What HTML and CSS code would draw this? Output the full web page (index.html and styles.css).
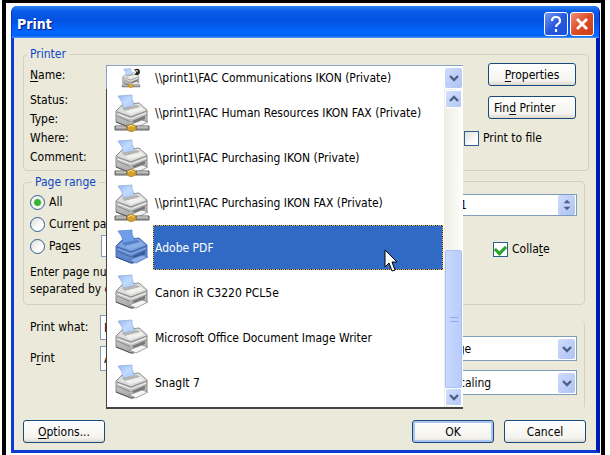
FILE: index.html
```html
<!DOCTYPE html>
<html lang="en">
<head>
<meta charset="utf-8">
<title>Print</title>
<link rel="stylesheet" href="styles.css">
</head>
<body>
<svg class="defs" aria-hidden="true">
  <defs>
    <linearGradient id="paper" x1="0" y1="0" x2="1" y2="1"><stop offset="0" stop-color="#8fb8f6"/><stop offset=".5" stop-color="#c2dbff"/><stop offset="1" stop-color="#a4c6fa"/></linearGradient>
    <linearGradient id="face" x1="0" y1="0" x2="0" y2="1"><stop offset="0" stop-color="#e6e6e4"/><stop offset="1" stop-color="#a4a4a4"/></linearGradient>
    <symbol id="printer" viewBox="0 0 36 38">
      <path d="M2 17 8 11 25 9 33 16 33 27 17 34 2 28Z" fill="url(#face)" stroke="#8b8b8b"/>
      <path d="M4 17 9 12 25 10 32 16 17 22Z" fill="#dededc"/>
      <path d="M4 2 18 1 18 5 21 12 9 14 8 8Z" fill="url(#paper)" stroke="#90a8cf" stroke-width=".7"/>
      <path d="M8 14 23 11 26 13 11 17Z" fill="#b4b4b4"/>
      <path d="M11 17 27 13 30 16 16 20Z" fill="#f0f0ee"/>
      <path d="M3 18 17 23 33 17M3 22 17 28 33 21" fill="none" stroke="#8a8a8a"/>
      <path d="M4 20 17 25 32 19" fill="none" stroke="#f4f4f4"/>
      <path d="M17 23V34" stroke="#c9c9c9"/>
      <path d="M19 27 31 22 31 25 20 30Z" fill="#777"/>
      <path d="M15 31 28 26 34 28 22 34Z" fill="#f5f5f3" stroke="#888" stroke-width=".8"/>
      <path d="M2 28 17 34 20 34" fill="none" stroke="#555"/>
    </symbol>
    <symbol id="printer-selected" viewBox="0 0 36 38">
      <path d="M2 17 8 11 25 9 33 16 33 27 17 34 2 28Z" fill="#5f87cb" stroke="#4a6fae"/>
      <path d="M4 17 9 12 25 10 32 16 17 22Z" fill="#7ea3df"/>
      <path d="M4 2 18 1 18 5 21 12 9 14 8 8Z" fill="#6f9fe8" stroke="#5480c8" stroke-width=".7"/>
      <path d="M8 14 23 11 26 13 11 17Z" fill="#567fc4"/>
      <path d="M11 17 27 13 30 16 16 20Z" fill="#8aaee6"/>
      <path d="M3 18 17 23 33 17M3 22 17 28 33 21" fill="none" stroke="#4068a8"/>
      <path d="M4 20 17 25 32 19" fill="none" stroke="#8fb0e6"/>
      <path d="M19 27 31 22 31 25 20 30Z" fill="#34599a"/>
      <path d="M15 31 28 26 34 28 22 34Z" fill="#8eb0e8" stroke="#4a70b0" stroke-width=".8"/>
      <path d="M2 28 17 34 20 34" fill="none" stroke="#2e4f8c"/>
    </symbol>
    <symbol id="network" viewBox="0 0 36 38">
      <path d="M1 32H13V36H1ZM22 32H35V36H22Z" fill="#a1a1a1" stroke="#5e5e5e"/>
      <path d="M2 33H12M23 33H34" stroke="#dcdcdc"/>
      <path d="M13 32 17 30 22 32V36L17 38 13 36Z" fill="#d5a12a" stroke="#8b681c" stroke-width=".6"/>
      <path d="M14 33 17 31 20 33" fill="none" stroke="#ffe18b"/>
    </symbol>
    <symbol id="chev" viewBox="0 0 12 10"><path d="M2 3 6 7 10 3" fill="none" stroke="#4d6185" stroke-width="2.4"/></symbol>
  </defs>
</svg>
<main class="frame">
<form class="dialog">
  <header class="titlebar">
    <h1>Print</h1>
    <button type="button" class="cap help" aria-label="Help"><svg viewBox="0 0 20 20"><path d="M6 7Q6 3 10 3T14 7Q14 9 12 10T10 13M10 15V18" fill="none" stroke="#fff" stroke-width="2.2"/></svg></button>
    <button type="button" class="cap close" aria-label="Close"><svg viewBox="0 0 20 20"><path d="M5 5 15 15M15 5 5 15" stroke="#fff" stroke-width="2.8"/></svg></button>
  </header>
  <div class="content">
    <fieldset class="group printer">
      <legend>Printer</legend>
      <div class="facts">
        <span class="name" id="name-label"><u>N</u>ame:</span>
        <span>Status:</span><span>Type:</span><span>Where:</span><span>Comment:</span>
      </div>
      <div class="combo">
        <button type="button" class="current" aria-labelledby="name-label current-name">
          <svg class="small" viewBox="0 0 36 38"><use href="#printer"/><use href="#network"/><path d="M24 3Q34-2 35 7 35 15 25 13L28 8Z" fill="#222"/><path d="M27 5 31 6" stroke="#fff" stroke-width="2"/></svg>
          <span class="label" id="current-name">\\print1\FAC Communications IKON (Private)</span>
          <span class="drop"><svg><use href="#chev"/></svg></span>
        </button>
        <div class="menu">
          <ul role="listbox" aria-labelledby="name-label">
            <li role="option"><svg><use href="#printer"/><use href="#network"/></svg><span>\\print1\FAC Human Resources IKON FAX (Private)</span></li>
            <li role="option"><svg><use href="#printer"/><use href="#network"/></svg><span>\\print1\FAC Purchasing IKON (Private)</span></li>
            <li role="option"><svg><use href="#printer"/><use href="#network"/></svg><span>\\print1\FAC Purchasing IKON FAX (Private)</span></li>
            <li role="option" class="selected" aria-selected="true"><svg><use href="#printer-selected"/></svg><span>Adobe PDF</span></li>
            <li role="option"><svg><use href="#printer"/></svg><span>Canon iR C3220 PCL5e</span></li>
            <li role="option"><svg><use href="#printer"/></svg><span>Microsoft Office Document Image Writer</span></li>
            <li role="option"><svg><use href="#printer"/></svg><span>SnagIt 7</span></li>
          </ul>
          <div class="scroll">
            <span class="step up"><svg><use href="#chev"/></svg></span>
            <span class="thumb"><i></i></span>
            <span class="step"><svg><use href="#chev"/></svg></span>
          </div>
          <svg class="cursor" viewBox="0 0 14 24"><path d="M1 1V18L5 14 8 22 11 21 8 13H13Z" fill="#fff" stroke="#000"/></svg>
        </div>
      </div>
      <div class="side">
        <button type="button" class="btn"><span><u>P</u>roperties</span></button>
        <button type="button" class="btn find"><span>Fin<u>d</u> Printer</span></button>
        <label class="check"><input type="checkbox"><span>Print to file</span></label>
      </div>
    </fieldset>

    <div class="pair">
      <fieldset class="group range">
        <legend>Page range</legend>
        <label><input type="radio" name="range" checked><span>All</span></label>
        <label><input type="radio" name="range"><span>Curr<u>e</u>nt page</span></label>
        <div class="pages"><label><input type="radio" name="range"><span>Pa<u>g</u>es</span></label><input type="text" class="box" aria-label="Pages"></div>
        <p>Enter page numbers<br>separated by commas</p>
      </fieldset>
      <fieldset class="group copies">
        <div class="box spin"><input type="text" value="1" aria-label="Number of copies"><span class="drop"><svg viewBox="0 0 12 14"><path d="M2 5 6 1 10 5ZM2 9 6 13 10 9Z" fill="#4d6185"/></svg></span></div>
        <label class="check"><input type="checkbox" checked><span>Colla<u>t</u>e</span></label>
      </fieldset>
    </div>

    <div class="pair lower">
      <div class="what">
        <label for="what">Print what:</label><select id="what" class="box"><option>Document</option></select>
        <label for="which">P<u>r</u>int</label><select id="which" class="box"><option>All pages in range</option></select>
      </div>
      <div class="group zoom">
        <div class="box pick"><select aria-label="Pages per sheet"><option>1 page</option></select><span class="drop"><svg><use href="#chev"/></svg></span></div>
        <div class="box pick"><select aria-label="Scale to paper size"><option>No Scaling</option></select><span class="drop"><svg><use href="#chev"/></svg></span></div>
      </div>
    </div>

    <footer>
      <button type="button" class="btn options"><span><u>O</u>ptions...</span></button>
      <button type="submit" class="btn default">OK</button>
      <button type="button" class="btn">Cancel</button>
    </footer>
  </div>
</form>
</main>
</body>
</html>
```
FILE: styles.css
```css
* { box-sizing: border-box; }
body {
  margin: 0;
  background: #fff;
  font: 12px/18px "DejaVu Sans Condensed", "DejaVu Sans", sans-serif;
  color: #000;
}
button, input, select { font: inherit; color: inherit; margin: 0; }
u { text-underline-offset: 2px; }
.defs { position: absolute; width: 0; height: 0; }

.frame {
  margin: 0 5px 0 2px;
  min-height: 100vh;
  padding: 3px 1px 1px 5px;
  border: solid #000;
  border-width: 3px 4px 0;
}
.dialog {
  border: solid #0a3cd2;
  border-width: 0 4px 3px 3px;
  border-right-color: #0018b4;
  border-radius: 6px 6px 0 0;
  background: #0a3cd2;
}
.titlebar {
  display: flex;
  align-items: center;
  gap: 2px;
  height: 32px;
  padding: 3px 5px 0 3px;
  margin: 0 -3px 0 -2px;
  border-radius: 5px 5px 0 0;
  background: linear-gradient(#2c86f4, #0a5ce8 15%, #0352e2 45%, #0265fc 80%, #0264fa 94%, #5b9cf4);
}
h1 {
  flex: 1;
  margin: 0 0 0 2px;
  font: bold 14px/18px "DejaVu Sans Condensed", "DejaVu Sans", sans-serif;
  color: #fff;
  text-shadow: 1px 1px 1px #0a1883;
}
.cap {
  display: grid;
  width: 24px;
  height: 24px;
  padding: 1px;
  border: 1px solid #fff;
  border-radius: 3px;
}
.cap svg { width: 20px; height: 20px; }
.help { background: linear-gradient(135deg, #7699f4, #2858e0 50%, #1c4fd6); }
.close { background: linear-gradient(135deg, #ee9078, #dc4d28 50%, #c93c14); }

.content {
  padding: 7px 7px 7px 9px;
  background: #ebe9d9;
}
.group {
  min-width: 0;
  margin: 0;
  padding: 0;
  border: 1px solid #d3d1c1;
  border-radius: 4px;
}
legend { padding: 0 3px; color: #0b46c8; }

.printer { display: flex; height: 126px; padding: 0 12px 0 6px; }
.printer legend { margin-left: -3px; }
.facts { display: flex; flex-direction: column; flex: 0 0 76px; }
.facts span { line-height: 19px; }
.facts .name { line-height: 24px; margin-bottom: 4px; }
.combo { position: relative; flex: 1; height: 24px; margin-top: 2px; }
.current {
  display: flex;
  align-items: center;
  width: 100%;
  height: 24px;
  padding: 0 1px 0 14px;
  border: solid #86a5c4;
  border-width: 1px 0 0 1px;
  background: #fff;
  text-align: left;
}
.small { width: 20px; height: 20px; flex: none; }
.label { flex: 1; margin-left: 14px; white-space: nowrap; }
.drop {
  display: grid;
  place-items: center;
  flex: none;
  width: 17px;
  height: 20px;
  border-radius: 2px;
  background: linear-gradient(135deg, #cddbfc, #afc3f4);
}
.drop svg, .step svg { width: 12px; height: 12px; }
.menu {
  position: absolute;
  z-index: 2;
  top: 100%;
  left: 0;
  right: 0;
  display: flex;
  border: solid #444;
  border-width: 0 0 2px 1px;
  background: #fff;
}
.menu ul { flex: 1; margin: 0; padding: 1px 1px 2px 7px; list-style: none; }
.menu li { display: flex; align-items: center; height: 45px; gap: 3px; }
.menu li svg { width: 36px; height: 38px; flex: none; }
.menu li span { flex: 1; height: 45px; padding-left: 2px; line-height: 46px; white-space: nowrap; }
.menu .selected span { padding-left: 1px; line-height: 44px; color: #fff; background: #316ac5; border: 1px dashed #211d10; outline: 1px dotted #d8b957; outline-offset: -1px; }
.cursor { position: absolute; left: 277px; top: 160px; width: 14px; height: 24px; }
.scroll {
  display: flex;
  flex-direction: column;
  width: 19px;
  padding: 1px;
  background: linear-gradient(90deg, #eeede5, #fefefb);
}
.step {
  display: grid;
  place-items: center;
  height: 18px;
  border: 1px solid #fff;
  border-radius: 2px;
  background: linear-gradient(135deg, #d3e0fe, #b3c8f5);
}
.up svg { transform: rotate(180deg); }
.thumb {
  display: grid;
  place-items: center;
  height: 138px;
  margin-top: auto;
  border: 1px solid #a9c1f3;
  border-radius: 2px;
  background: linear-gradient(90deg, #c8d8ff, #b9ccfb);
}
.thumb i { width: 8px; height: 5px; border: solid #8ba9e9; border-width: 1px 0; }

.side { display: flex; flex-direction: column; align-items: flex-end; flex: 0 0 113px; }
.btn {
  width: 82px;
  height: 23px;
  padding: 0;
  border: 1px solid #164b7b;
  border-radius: 3px;
  background: linear-gradient(#fff, #f4f3ee 80%, #dcd8cc);
  line-height: 18px;
}
.side .btn { width: 88px; margin-bottom: 10px; }
.side .find { padding-left: 5px; text-align: left; }
.default { border: 1px solid #164b7b; box-shadow: inset 0 0 0 2px #a9c4f0; }
.check { display: flex; align-items: center; gap: 4px; white-space: nowrap; }
.side .check { width: 112px; }
input[type="checkbox"], input[type="radio"] {
  appearance: none;
  flex: none;
  width: 15px;
  height: 15px;
  border: 1px solid #2c5f90;
  background: linear-gradient(135deg, #dedfdc, #fff 70%);
}
input[type="radio"] { border-radius: 50%; }
input[type="radio"]:checked { background: radial-gradient(circle, #35b432 0 3px, #f3f3f0 4px); }
input[type="checkbox"]:checked { background: #fff; display: grid; place-items: center; }
input[type="checkbox"]:checked::before {
  content: "";
  width: 8px;
  height: 5px;
  border: solid #29a329;
  border-width: 0 0 3px 3px;
  transform: rotate(-45deg);
}

.pair { display: grid; grid-template-columns: 1fr 1fr; gap: 9px; margin: 2px 4px 0 0; }
.range { height: 132px; padding: 0 6px; }
.range label { display: flex; align-items: center; gap: 4px; height: 22px; white-space: nowrap; }
.range legend { margin-left: 2px; }
.pages { display: flex; gap: 6px; }
.pages label { width: 65px; }
.pages .box { flex: 1; min-width: 0; }
.range p { margin: 7px 0 0; line-height: 17px; }
.box { height: 22px; border: 1px solid #7f9db9; border-radius: 0; background: #fff; }
.copies {
  display: flex;
  flex-direction: column;
  align-items: flex-end;
  gap: 24px;
  height: 124px;
  margin-top: 8px;
  padding: 12px 7px;
}
.spin, .pick { display: flex; align-items: center; padding: 1px; }
.spin { width: 122px; }
.spin input, .pick select { appearance: none; flex: 1; min-width: 0; padding: 0 3px; border: 0; background: transparent; }
.copies .check { width: 84px; }

.lower { margin-top: 10px; height: 92px; }
.what { display: grid; grid-template-columns: 70px 1fr; gap: 6px 0; align-content: start; padding-left: 7px; }
.what label { line-height: 24px; }
.what .box { height: 25px; appearance: none; padding: 0 3px; }
.zoom {
  display: flex;
  flex-direction: column;
  align-items: flex-end;
  gap: 9px;
  height: 88px;
  margin-top: 6px;
  padding: 15px 7px 0;
  border-width: 0 1px 0 0;
}
.zoom .pick { width: 148px; height: 25px; }
footer { display: flex; gap: 10px; margin: 13px 3px 0 0; }
footer .options { margin-right: auto; }
```
